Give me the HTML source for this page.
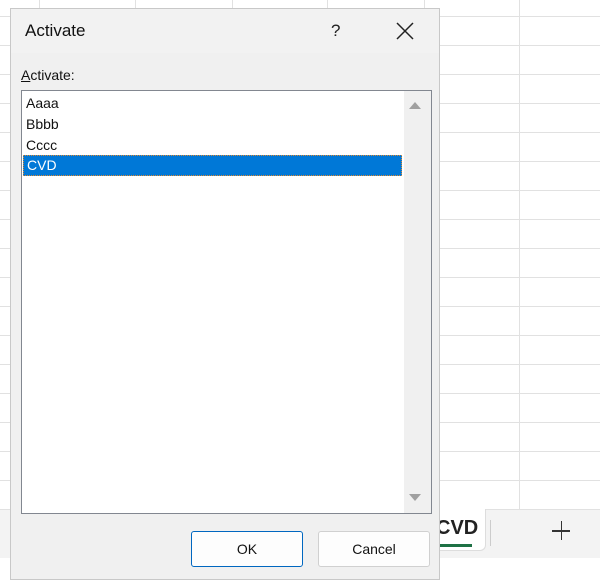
<!DOCTYPE html>
<html><head><style>
body{margin:0;width:600px;height:582px;position:relative;overflow:hidden;background:#fff;font-family:"Liberation Sans",sans-serif;}
.v{position:absolute;top:0;height:509px;width:1px;background:#e1e1e1}
.h{position:absolute;left:0;width:600px;height:1px;background:#e1e1e1}
.abs{position:absolute}
</style></head><body>
<div class="v" style="left:39px"></div><div class="v" style="left:135px"></div><div class="v" style="left:232px"></div><div class="v" style="left:327px"></div><div class="v" style="left:424px"></div><div class="v" style="left:519px"></div>
<div class="h" style="top:16px"></div><div class="h" style="top:45px"></div><div class="h" style="top:74px"></div><div class="h" style="top:103px"></div><div class="h" style="top:132px"></div><div class="h" style="top:161px"></div><div class="h" style="top:190px"></div><div class="h" style="top:219px"></div><div class="h" style="top:248px"></div><div class="h" style="top:277px"></div><div class="h" style="top:306px"></div><div class="h" style="top:335px"></div><div class="h" style="top:364px"></div><div class="h" style="top:393px"></div><div class="h" style="top:422px"></div><div class="h" style="top:451px"></div><div class="h" style="top:480px"></div>
<div class="abs" style="left:0;top:509px;width:600px;height:48px;background:#f3f3f3;border-top:1px solid #e1e1e1"></div>
<div class="abs" style="left:420px;top:509px;width:65px;height:41px;background:#fff;border-right:1px solid #ddd;border-bottom:1px solid #ddd;border-radius:0 0 6px 0"></div>
<div class="abs" style="left:436px;top:517px;font-size:20px;font-weight:bold;color:#222">CVD</div>
<div class="abs" style="left:438px;top:544px;width:34px;height:3px;background:#1e7145"></div>
<div class="abs" style="left:490px;top:520px;width:1px;height:26px;background:#ccc"></div>
<div class="abs" style="left:552px;top:530px;width:18px;height:1.5px;background:#333"></div>
<div class="abs" style="left:560.5px;top:521px;width:1.5px;height:19px;background:#333"></div>
<div class="abs" style="left:10px;top:8px;width:430px;height:572px;background:#f0f0f0;border:1px solid #c8c8c8;box-sizing:border-box">
 <div class="abs" style="left:0;top:0;width:428px;height:44px;background:#f2f2f2"></div>
 <div class="abs" style="left:14px;top:12px;font-size:17px;color:#111">Activate</div>
 <div class="abs" style="left:320px;top:12px;font-size:17px;color:#222">?</div>
 <svg class="abs" style="left:385px;top:13px" width="18" height="18"><path d="M1 1L17 17M17 1L1 17" stroke="#222" stroke-width="1.5"/></svg>
 <div class="abs" style="left:10px;top:58px;font-size:14px;color:#111"><u>A</u>ctivate:</div>
 <div class="abs" style="left:10px;top:81px;width:411px;height:424px;background:#fff;border:1px solid #828790;box-sizing:border-box">
  <div class="abs" style="right:0;top:0;width:27px;height:422px;background:#f0f0f0"></div>
  <svg class="abs" style="left:387px;top:10px" width="12" height="8"><path d="M0 8L6 1L12 8Z" fill="#a0a0a0"/></svg>
  <svg class="abs" style="left:387px;top:403px" width="12" height="8"><path d="M0 0L6 7L12 0Z" fill="#a0a0a0"/></svg>
  <div class="abs" style="left:4px;top:2px;font-size:14px;line-height:21px;color:#111">Aaaa<br>Bbbb<br>Cccc</div>
  <div class="abs" style="left:1px;top:64px;width:379px;height:21px;background:#0078d7;border:1px dotted #e08a30;box-sizing:border-box;color:#fff;font-size:14px;line-height:19px;padding-left:3px">CVD</div>
 </div>
 <div class="abs" style="left:180px;top:522px;width:112px;height:36px;background:#fdfdfd;border:1px solid #0067c0;border-radius:3px;box-sizing:border-box;text-align:center;line-height:34px;font-size:14px;color:#111">OK</div>
 <div class="abs" style="left:307px;top:522px;width:112px;height:36px;background:#fdfdfd;border:1px solid #d0d0d0;border-radius:3px;box-sizing:border-box;text-align:center;line-height:34px;font-size:14px;color:#111">Cancel</div>
</div>
</body></html>
